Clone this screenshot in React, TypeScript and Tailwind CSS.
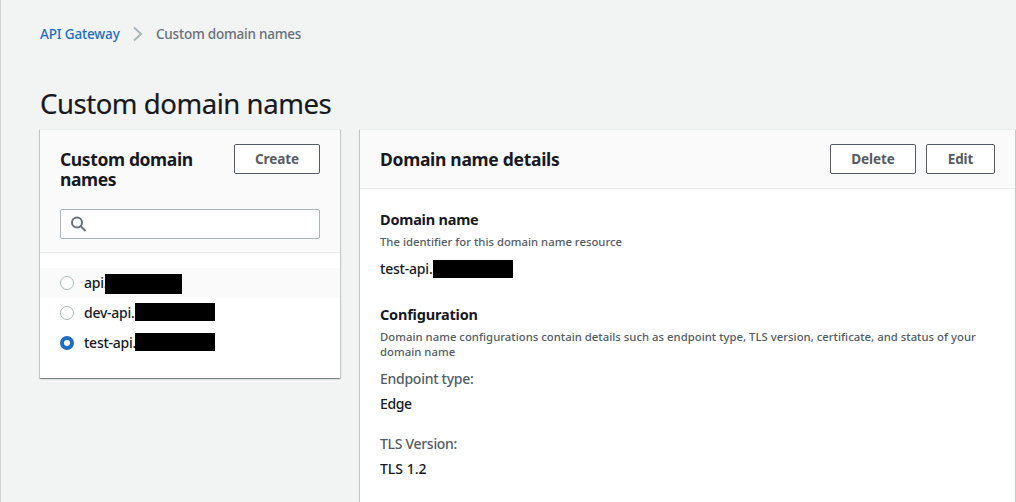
import type { ReactNode } from "react";

const panelClass =
  "border-t border-[#eaeded] bg-white shadow-[0_1px_1px_0_rgba(0,28,36,0.3),1px_1px_1px_0_rgba(0,28,36,0.15),-1px_1px_1px_0_rgba(0,28,36,0.15)]";

const domains = [
  { prefix: "api.", textWidth: "w-[21px]", mask: "w-[77px] h-5 top-[6px]", hovered: true, selected: false },
  { prefix: "dev-api.", textWidth: "w-[51px]", mask: "w-[80px] h-[18px] top-[5px]", hovered: false, selected: false },
  { prefix: "test-api.", textWidth: "w-[51px]", mask: "w-[80px] h-[18px] top-[5px]", hovered: false, selected: true },
];

function Button({ children, width }: { children: ReactNode; width: string }) {
  return (
    <button
      className={`${width} h-[30px] shrink-0 rounded-[2px] border border-[#545b64] bg-white text-[13.5px] leading-5 font-bold tracking-[-0.1px] text-[#545b64]`}
    >
      {children}
    </button>
  );
}

function Radio({ selected }: { selected: boolean }) {
  return (
    <svg className="size-[14px] shrink-0" viewBox="0 0 14 14">
      {selected ? (
        <circle cx="7" cy="7" r="5" fill="#fff" stroke="#1e6fc0" strokeWidth="4" />
      ) : (
        <circle cx="7" cy="7" r="6.5" fill="#fff" stroke="#aab7b8" strokeWidth="1" />
      )}
    </svg>
  );
}

export default function App() {
  return (
    <div className="h-[502px] w-[1016px] overflow-hidden border-l border-[#d0d6d6] bg-[#f2f3f3] pl-[39px] font-['Noto_Sans',sans-serif] text-sm leading-5 font-medium text-[#16191f]">
      <nav className="flex h-[68px] items-center">
        <a className="w-20 text-[13.5px] whitespace-nowrap tracking-[-0.15px] text-[#1e6fc0]">API Gateway</a>
        <svg className="ml-[13px] h-4 w-[10px]" viewBox="0 0 10 16" fill="none" stroke="#aab7b8" strokeWidth="2">
          <path d="M1 1.5 8 8 1 14.5" />
        </svg>
        <span className="ml-[13px] text-[13.5px] tracking-[-0.22px] whitespace-nowrap text-[#687078]">
          Custom domain names
        </span>
      </nav>
      <h1 className="mt-[18px] h-[43px] text-[27.5px] leading-9 font-normal tracking-[-0.45px] whitespace-nowrap [-webkit-text-stroke-width:0.2px]">
        Custom domain names
      </h1>

      <div className="flex items-start gap-5">
        <section className={`${panelClass} h-[249px] w-[300px]`}>
          <header className="h-[123px] border-b border-[#eaeded] bg-[#fafafa] px-5 pt-[14px]">
            <div className="flex h-[65px] justify-between">
              <h2 className="w-[150px] pt-[5px] text-[17.5px] leading-5 font-bold tracking-[-0.38px]">
                Custom domain
                <br />
                names
              </h2>
              <Button width="w-[86px]">Create</Button>
            </div>
            <div className="flex h-[30px] items-center rounded-[2px] border border-[#aab7b8] bg-white pl-[10px]">
              <svg className="size-4" viewBox="0 0 16 16" fill="none" stroke="#687078" strokeWidth="2">
                <circle cx="6" cy="6.5" r="5" />
                <path d="m9.5 10 5 5" />
              </svg>
            </div>
          </header>
          <ul className="pt-[15px]">
            {domains.map((d) => (
              <li
                key={d.prefix}
                className={`flex h-[30px] items-center px-5 ${d.hovered ? "bg-[#fafafa]" : ""}`}
              >
                <Radio selected={d.selected} />
                <span className={`${d.textWidth} ml-[10px] tracking-[-0.25px] whitespace-nowrap`}>{d.prefix}</span>
                <span className="h-[30px]">
                  <span className={`${d.mask} relative block bg-black`} />
                </span>
              </li>
            ))}
          </ul>
        </section>

        <section className={`${panelClass} h-[420px] w-[655px]`}>
          <header className="flex h-[59px] justify-between border-b border-[#eaeded] bg-[#fafafa] px-5 pt-[14px]">
            <h2 className="pt-[5px] text-[17.5px] leading-5 font-bold tracking-[-0.3px]">Domain name details</h2>
            <div className="flex gap-[10px]">
              <Button width="w-[86px]">Delete</Button>
              <Button width="w-[69px]">Edit</Button>
            </div>
          </header>
          <div className="px-5 pt-[19px]">
            <h3 className="text-[14.5px] leading-[22px] font-bold tracking-[-0.22px]">Domain name</h3>
            <p className="mt-1 text-[11.3px] leading-[15px] tracking-[0.01px] text-[#545b64]">
              The identifier for this domain name resource
            </p>
            <div className="mt-[10px] flex items-center">
              <span className="w-[53px] tracking-[-0.2px] whitespace-nowrap">test-api.</span>
              <span className="h-[18px] w-20 bg-black" />
            </div>
            <h3 className="mt-6 text-[14.5px] leading-[22px] font-bold tracking-[-0.2px]">Configuration</h3>
            <p className="mt-1 text-[11.3px] leading-[15px] tracking-[0.025px] whitespace-nowrap text-[#545b64]">
              Domain name configurations contain details such as endpoint type, TLS version, certificate, and status of your
              <br />
              domain name
            </p>
            <dl>
              <dt className="mt-[10px] tracking-[-0.27px] text-[#545b64]">Endpoint type:</dt>
              <dd className="mt-[5px] tracking-[-0.4px]">Edge</dd>
              <dt className="mt-5 tracking-[-0.3px] text-[#545b64]">TLS Version:</dt>
              <dd className="mt-[5px]">TLS 1.2</dd>
            </dl>
          </div>
        </section>
      </div>
    </div>
  );
}
